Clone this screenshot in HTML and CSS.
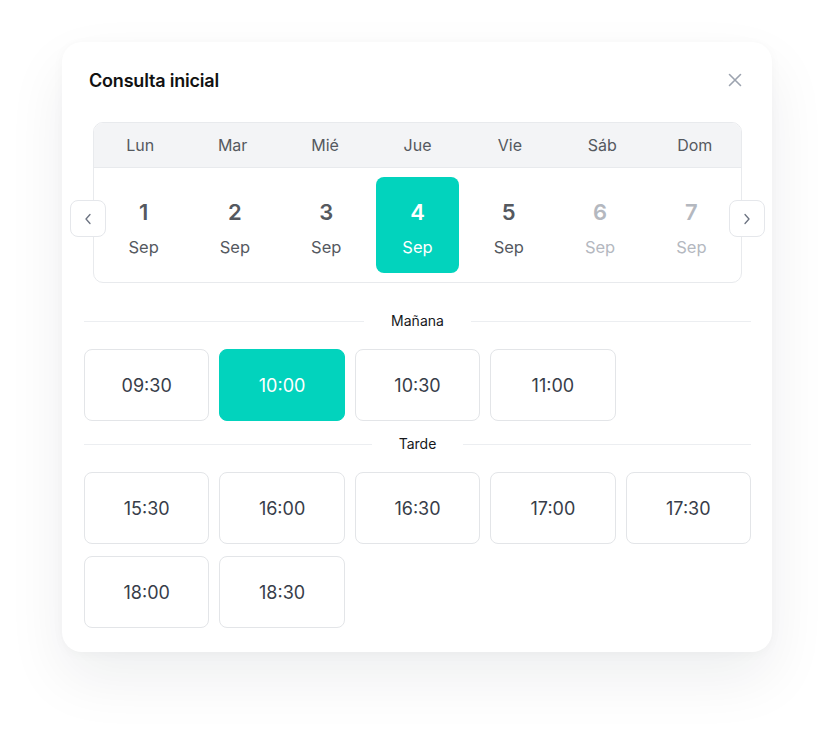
FILE: index.html
```html
<!DOCTYPE html>
<html lang="es">
<head>
  <meta charset="UTF-8" />
  <meta name="viewport" content="width=device-width, initial-scale=1.0" />
  <title>Consulta inicial</title>
  <link rel="stylesheet" href="styles.css">
</head>
<body>
  <div class="card">
    <div class="card-header">
      <h2>Consulta inicial</h2>
      <button class="close" aria-label="Cerrar">
        <svg width="14" height="14" viewBox="0 0 14 14"><path d="M1.5 1.5l11 11M12.5 1.5l-11 11" stroke="#9ca3af" stroke-width="1.6" stroke-linecap="round"/></svg>
      </button>
    </div>

    <div class="calendar">
      <button class="nav prev" aria-label="Anterior">
        <svg width="10" height="12" viewBox="0 0 10 12"><path d="M7 1.5L3 6l4 4.5" fill="none" stroke="#6b7280" stroke-width="1.3" stroke-linecap="round" stroke-linejoin="round"/></svg>
      </button>
      <div class="week">
        <div class="week-head">
          <span>Lun</span><span>Mar</span><span>Mié</span><span>Jue</span><span>Vie</span><span>Sáb</span><span>Dom</span>
        </div>
        <div class="week-days">
          <div class="day"><strong>1</strong><span>Sep</span></div>
          <div class="day"><strong>2</strong><span>Sep</span></div>
          <div class="day"><strong>3</strong><span>Sep</span></div>
          <div class="day selected"><strong>4</strong><span>Sep</span></div>
          <div class="day"><strong>5</strong><span>Sep</span></div>
          <div class="day disabled"><strong>6</strong><span>Sep</span></div>
          <div class="day disabled"><strong>7</strong><span>Sep</span></div>
        </div>
      </div>
      <button class="nav next" aria-label="Siguiente">
        <svg width="10" height="12" viewBox="0 0 10 12"><path d="M3 1.5L7 6l-4 4.5" fill="none" stroke="#6b7280" stroke-width="1.3" stroke-linecap="round" stroke-linejoin="round"/></svg>
      </button>
    </div>

    <div class="divider first"><span>Mañana</span></div>
    <div class="slots">
      <button class="slot">09:30</button>
      <button class="slot selected">10:00</button>
      <button class="slot">10:30</button>
      <button class="slot">11:00</button>
    </div>

    <div class="divider"><span>Tarde</span></div>
    <div class="slots">
      <button class="slot">15:30</button>
      <button class="slot">16:00</button>
      <button class="slot">16:30</button>
      <button class="slot">17:00</button>
      <button class="slot">17:30</button>
      <button class="slot">18:00</button>
      <button class="slot">18:30</button>
    </div>
  </div>
</body>
</html>
```

FILE: styles.css
```css
body {
  font-family: Inter, "Noto Sans", sans-serif;
  background-color: #ffffff;
  margin: 0;
  padding: 42px 0 0 62px;
  min-height: 100vh;
  box-sizing: border-box;
}

button {
  font-family: inherit;
  cursor: pointer;
}

.card {
  width: 710px;
  box-sizing: border-box;
  padding: 24px 21px 24px 22px;
  background: white;
  border-radius: 20px;
  box-shadow: 0 26px 60px rgba(17, 24, 39, 0.07), 0 2px 12px rgba(17, 24, 39, 0.03);
}

.card-header {
  display: flex;
  align-items: center;
  justify-content: space-between;
  height: 28px;
  padding-left: 5px;
}

.card-header h2 {
  margin: 0;
  font-size: 18px;
  font-weight: 600;
  color: #111111;
  letter-spacing: -0.2px;
}

.close {
  border: none;
  background: none;
  padding: 0;
  margin-right: 9px;
  width: 14px;
  height: 14px;
  display: flex;
}

/* calendar strip */
.calendar {
  position: relative;
  margin: 28px 9px 0;
}

.week {
  border: 1px solid #e8eaed;
  border-radius: 10px;
  overflow: hidden;
}

.week-head,
.week-days {
  display: grid;
  grid-template-columns: repeat(7, 1fr);
}

.week-head {
  height: 44px;
  align-items: center;
  background-color: #f3f4f6;
  border-bottom: 1px solid #e8eaed;
  text-align: center;
  font-size: 16px;
  color: #55595f;
}

.week-days {
  padding: 9px 4px;
}

.day {
  margin: 0 4px;
  height: 96px;
  box-sizing: border-box;
  padding-top: 21px;
  border-radius: 8px;
  display: flex;
  flex-direction: column;
  align-items: center;
  color: #55595f;
}

.day strong {
  font-size: 22px;
  font-weight: 600;
  line-height: 28px;
}

.day span {
  margin-top: 11px;
  font-size: 16.5px;
  line-height: 20px;
}

.day.selected {
  background-color: #02d3bd;
  color: white;
}

.day.disabled {
  color: #b4b8bf;
}

.nav {
  position: absolute;
  top: 78px;
  width: 36px;
  height: 37px;
  padding: 0;
  border: 1px solid #e5e7eb;
  border-radius: 8px;
  background: white;
  display: flex;
  align-items: center;
  justify-content: center;
}

.nav.prev { left: -23px; }
.nav.next { right: -23px; }

/* time slots */
.divider {
  display: flex;
  align-items: center;
  gap: 27px;
  margin: 28px 0 18px;
  font-size: 14px;
  line-height: 20px;
  color: #16181c;
}

.divider::before,
.divider::after {
  content: "";
  flex: 1;
  height: 1px;
  background-color: #eceef1;
}

.divider:not(.first) {
  margin-top: 13px;
}

.slots {
  display: grid;
  grid-template-columns: repeat(5, 1fr);
  column-gap: 10px;
  row-gap: 12px;
}

.slot {
  height: 72px;
  border: 1px solid #e3e5e8;
  border-radius: 8px;
  background: white;
  font-size: 18px;
  color: #373d49;
}

.slot.selected {
  background-color: #02d3bd;
  border-color: #02d3bd;
  color: white;
}
```
